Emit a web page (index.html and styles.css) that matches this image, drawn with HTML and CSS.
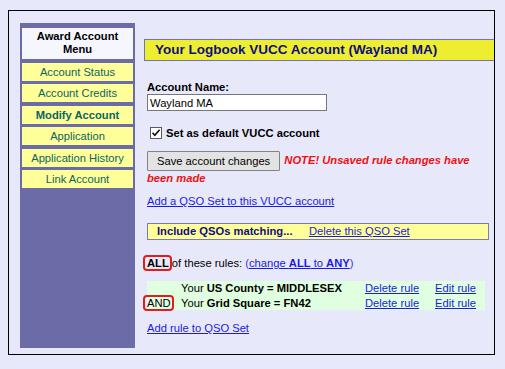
FILE: index.html
```html
<!DOCTYPE html>
<html lang="en">
<head>
<meta charset="utf-8">
<title>Your Logbook VUCC Account</title>
<link rel="stylesheet" href="styles.css">
</head>
<body>
<div class="frame">
  <nav class="menu">
    <div class="menu-head">Award Account<br>Menu</div>
    <a class="menu-item" href="#">Account Status</a>
    <a class="menu-item" href="#">Account Credits</a>
    <a class="menu-item current" href="#">Modify Account</a>
    <a class="menu-item" href="#">Application</a>
    <a class="menu-item" href="#">Application History</a>
    <a class="menu-item" href="#">Link Account</a>
  </nav>
  <main class="content">
    <h1 class="title">Your Logbook VUCC Account (Wayland MA)</h1>
    <div class="body">
      <div class="field-label">Account Name:</div>
      <input class="name-input" type="text" value="Wayland MA">
      <div class="check-row">
        <svg class="check" width="12" height="12" viewBox="0 0 12 12" aria-hidden="true">
          <rect x="0.5" y="0.5" width="11" height="11" fill="#fff" stroke="#5a5a5a"/>
          <path d="M2.5 5.8 L4.8 8.3 L9.6 2.8" fill="none" stroke="#111" stroke-width="1.6"/>
        </svg>
        <span>Set as default VUCC account</span>
      </div>
      <p class="save-row"><button class="btn" type="button">Save account changes</button> <span class="note">NOTE! Unsaved rule changes have</span> <span class="note note-end">been made</span></p>
      <p class="line add-set"><a class="link" href="#">Add a QSO Set to this VUCC account</a></p>
      <div class="set-box"><span class="set-label">Include QSOs matching...</span><a class="link" href="#">Delete this QSO Set</a></div>
      <p class="line rules-head"><span class="mark mark-all">ALL</span> of these rules: <span class="paren">(<a class="link" href="#">change <b>ALL</b> to <b>ANY</b></a>)</span></p>
      <div class="rules">
        <span></span>
        <span>Your <b>US County = MIDDLESEX</b></span>
        <a class="link" href="#">Delete rule</a>
        <a class="link" href="#">Edit rule</a>
        <span><span class="mark mark-and">AND</span></span>
        <span>Your <b>Grid Square = FN42</b></span>
        <a class="link" href="#">Delete rule</a>
        <a class="link" href="#">Edit rule</a>
      </div>
      <p class="line add-rule"><a class="link" href="#">Add rule to QSO Set</a></p>
    </div>
  </main>
</div>
</body>
</html>
```
FILE: styles.css
```css
* { box-sizing: border-box; }

html, body {
  margin: 0;
  background: #e8e8fb;
}

body {
  font-family: "Liberation Sans", Arial, sans-serif;
  font-size: 11.2px;
  line-height: 14px;
  color: #000;
}

.frame {
  margin: 10px 0 0 8px;
  width: 487px;
  height: 345px;
  border: 1px solid #000;
  display: flex;
  padding: 12px 0 6px 11px;
}

.menu {
  width: 115px;
  flex: none;
  background: #6b6ba8;
  padding: 5px 2px;
  display: flex;
  flex-direction: column;
  gap: 3.5px;
}

.menu-head {
  height: 31px;
  background: #f6f6ff;
  font-weight: bold;
  text-align: center;
  line-height: 13px;
  padding-top: 2px;
}

.menu-item {
  height: 18px;
  background: #ffff99;
  color: #0b6464;
  text-decoration: none;
  text-align: center;
  line-height: 18px;
}

.menu-item.current { font-weight: bold; }

.content {
  flex: 1;
  margin-left: 9px;
  padding-top: 16px;
}

.title {
  margin: 0;
  height: 22px;
  background: #eeee30;
  border: 1px solid #7373b8;
  border-right: none;
  color: #0e0e80;
  font-size: 13.5px;
  line-height: 20px;
  padding-left: 10px;
}

.body {
  padding-left: 3px;
  padding-right: 4px;
}

.field-label {
  margin-top: 19px;
  font-weight: bold;
}

.name-input {
  display: block;
  width: 180px;
  height: 17px;
  margin: 0;
  border: 1px solid #777;
  background: #fff;
  font: inherit;
  padding: 0 2px;
  color: #000;
}

.check-row {
  margin-top: 14.5px;
  display: flex;
  align-items: center;
  gap: 4px;
  padding-left: 3px;
  font-weight: bold;
}

.check { display: block; }

.save-row {
  margin: 11.5px 0 0;
}

.btn {
  height: 20px;
  vertical-align: middle;
  font: inherit;
  color: #000;
  background: #e3e3e3;
  border: 1px solid #838383;
  border-radius: 1px;
  padding: 0 9px;
}

.note {
  color: #f01010;
  font-weight: bold;
  font-style: italic;
  margin-left: 1px;
}

.note-end { margin-left: 0; }

.line { margin: 0; }

.add-set { margin-top: 9px; }

.link {
  color: #1b1be0;
  text-decoration: underline;
}

.set-box {
  margin-top: 15px;
  height: 17px;
  width: 342px;
  background: #ffff99;
  border: 1px solid #7b7bb0;
  padding-left: 9px;
  line-height: 15px;
}

.set-label {
  display: inline-block;
  width: 152px;
  color: #0e0e80;
  font-weight: bold;
}

.rules-head { margin-top: 16px; }

.paren { color: #3838c8; }

.mark {
  position: relative;
}

.mark::after {
  content: "";
  position: absolute;
  border: 2.5px solid #e41b1b;
  border-radius: 4px;
}

.mark-all { font-weight: bold; }
.mark-all::after { left: -4px; right: -3px; top: -2px; bottom: -2px; }
.mark-and::after { left: -4px; right: -3px; top: -2px; bottom: -2px; }

.rules {
  margin-top: 11px;
  width: 338px;
  background: #e0ffe0;
  display: grid;
  grid-template-columns: 34px 184px 70px 1fr;
  line-height: 14.5px;
}

.add-rule { margin-top: 11px; }
```
